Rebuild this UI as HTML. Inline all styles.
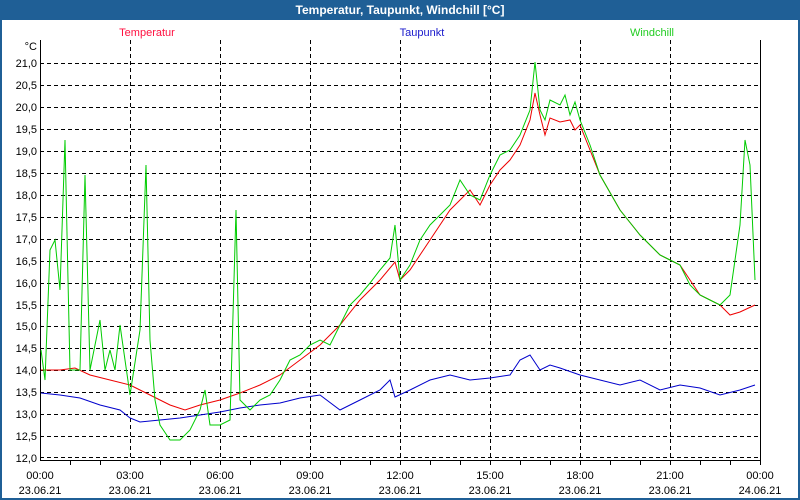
<!DOCTYPE html>
<html><head><meta charset="utf-8"><style>
html,body{margin:0;padding:0;width:800px;height:500px;overflow:hidden;background:#fff}
svg{display:block}
text{font-family:"Liberation Sans",sans-serif;font-size:11px}
</style></head><body>
<svg width="800" height="500" xmlns="http://www.w3.org/2000/svg" shape-rendering="crispEdges">
<rect x="0" y="0" width="800" height="500" fill="#1f5f96"/>
<rect x="2" y="20" width="796" height="478" fill="#fff"/>
<text x="400" y="14" text-anchor="middle" fill="#fff" font-weight="bold" style="font-size:12px">Temperatur, Taupunkt, Windchill [°C]</text>
<text x="147" y="36" text-anchor="middle" fill="#ff1040">Temperatur</text>
<text x="422" y="36" text-anchor="middle" fill="#1a1acc">Taupunkt</text>
<text x="652" y="36" text-anchor="middle" fill="#22cc22">Windchill</text>
<g stroke="#000" stroke-dasharray="4,3" stroke-width="1">
<line x1="40" x2="760" y1="63.5" y2="63.5"/><line x1="40" x2="760" y1="85.5" y2="85.5"/><line x1="40" x2="760" y1="107.5" y2="107.5"/><line x1="40" x2="760" y1="129.5" y2="129.5"/><line x1="40" x2="760" y1="151.5" y2="151.5"/><line x1="40" x2="760" y1="173.5" y2="173.5"/><line x1="40" x2="760" y1="195.5" y2="195.5"/><line x1="40" x2="760" y1="217.5" y2="217.5"/><line x1="40" x2="760" y1="239.5" y2="239.5"/><line x1="40" x2="760" y1="261.5" y2="261.5"/><line x1="40" x2="760" y1="283.5" y2="283.5"/><line x1="40" x2="760" y1="305.5" y2="305.5"/><line x1="40" x2="760" y1="326.5" y2="326.5"/><line x1="40" x2="760" y1="348.5" y2="348.5"/><line x1="40" x2="760" y1="370.5" y2="370.5"/><line x1="40" x2="760" y1="392.5" y2="392.5"/><line x1="40" x2="760" y1="414.5" y2="414.5"/><line x1="40" x2="760" y1="436.5" y2="436.5"/><line x1="40" x2="760" y1="457.5" y2="457.5"/>
<line x1="130.5" x2="130.5" y1="40" y2="460"/><line x1="220.5" x2="220.5" y1="40" y2="460"/><line x1="310.5" x2="310.5" y1="40" y2="460"/><line x1="400.5" x2="400.5" y1="40" y2="460"/><line x1="490.5" x2="490.5" y1="40" y2="460"/><line x1="580.5" x2="580.5" y1="40" y2="460"/><line x1="670.5" x2="670.5" y1="40" y2="460"/>
</g>
<path d="M40.5 40V460.5H760.5V40" fill="none" stroke="#000"/>
<g stroke="#000"><line x1="70.5" x2="70.5" y1="460" y2="465"/><line x1="100.5" x2="100.5" y1="460" y2="465"/><line x1="130.5" x2="130.5" y1="460" y2="465"/><line x1="160.5" x2="160.5" y1="460" y2="465"/><line x1="190.5" x2="190.5" y1="460" y2="465"/><line x1="220.5" x2="220.5" y1="460" y2="465"/><line x1="250.5" x2="250.5" y1="460" y2="465"/><line x1="280.5" x2="280.5" y1="460" y2="465"/><line x1="310.5" x2="310.5" y1="460" y2="465"/><line x1="340.5" x2="340.5" y1="460" y2="465"/><line x1="370.5" x2="370.5" y1="460" y2="465"/><line x1="400.5" x2="400.5" y1="460" y2="465"/><line x1="430.5" x2="430.5" y1="460" y2="465"/><line x1="460.5" x2="460.5" y1="460" y2="465"/><line x1="490.5" x2="490.5" y1="460" y2="465"/><line x1="520.5" x2="520.5" y1="460" y2="465"/><line x1="550.5" x2="550.5" y1="460" y2="465"/><line x1="580.5" x2="580.5" y1="460" y2="465"/><line x1="610.5" x2="610.5" y1="460" y2="465"/><line x1="640.5" x2="640.5" y1="460" y2="465"/><line x1="670.5" x2="670.5" y1="460" y2="465"/><line x1="700.5" x2="700.5" y1="460" y2="465"/><line x1="730.5" x2="730.5" y1="460" y2="465"/><line x1="760.5" x2="760.5" y1="460" y2="465"/></g>
<g fill="#000" text-anchor="end">
<text x="37" y="50">°C</text>
<text x="37" y="67">21,0</text><text x="37" y="89">20,5</text><text x="37" y="111">20,0</text><text x="37" y="133">19,5</text><text x="37" y="155">19,0</text><text x="37" y="177">18,5</text><text x="37" y="199">18,0</text><text x="37" y="221">17,5</text><text x="37" y="243">17,0</text><text x="37" y="265">16,5</text><text x="37" y="287">16,0</text><text x="37" y="309">15,5</text><text x="37" y="330">15,0</text><text x="37" y="352">14,5</text><text x="37" y="374">14,0</text><text x="37" y="396">13,5</text><text x="37" y="418">13,0</text><text x="37" y="440">12,5</text><text x="37" y="462">12,0</text>
</g>
<g fill="#000" text-anchor="middle">
<text x="40" y="479">00:00</text><text x="40" y="494">23.06.21</text>
<text x="130" y="479">03:00</text><text x="130" y="494">23.06.21</text>
<text x="220" y="479">06:00</text><text x="220" y="494">23.06.21</text>
<text x="310" y="479">09:00</text><text x="310" y="494">23.06.21</text>
<text x="400" y="479">12:00</text><text x="400" y="494">23.06.21</text>
<text x="490" y="479">15:00</text><text x="490" y="494">23.06.21</text>
<text x="580" y="479">18:00</text><text x="580" y="494">23.06.21</text>
<text x="670" y="479">21:00</text><text x="670" y="494">23.06.21</text>
<text x="760" y="479">00:00</text><text x="760" y="494">24.06.21</text>
</g>
<g fill="none" stroke-width="1" shape-rendering="auto">
<polyline stroke="#0000cc" points="41,393 60,395 80,398 100,405 120,410 130,418 140,422 160,420 180,418 200,415 220,412 240,408 260,405 280,403 300,398 320,395 340,410 360,400 380,390 390,380 395,397 410,390 430,380 450,375 470,380 490,378 510,375 520,360 530,355 540,370 550,365 560,368 580,375 600,380 620,385 640,380 660,390 680,385 700,388 720,395 740,390 755,385"/>
<polyline stroke="#ee0000" points="41,370 60,370 75,368 90,375 110,380 130,385 150,395 170,405 185,410 200,405 220,400 240,393 260,385 280,375 300,360 320,345 340,325 360,300 380,280 395,262 400,280 410,270 430,240 450,210 470,190 480,205 490,185 500,170 510,160 520,145 530,120 535,93 540,115 545,135 550,118 560,122 570,120 575,130 580,125 590,150 600,175 620,210 640,235 660,255 680,265 700,295 720,305 730,315 740,312 755,305"/>
<polyline stroke="#00cc00" points="41,350 45,380 50,250 55,240 60,290 65,140 68,280 70,370 80,370 85,175 90,370 100,320 105,370 110,350 115,370 120,325 125,360 130,395 140,330 146,165 150,340 155,400 160,425 170,440 180,440 190,430 200,410 205,390 210,425 220,425 230,420 236,210 240,400 250,410 260,400 270,395 280,380 290,360 300,355 310,345 320,340 330,345 340,325 350,305 360,295 370,283 380,270 390,258 395,225 400,280 410,265 420,240 430,225 440,215 450,205 460,180 470,195 480,200 490,175 500,155 510,150 520,135 530,110 535,62 540,110 545,120 550,100 560,105 565,95 570,115 575,102 580,120 590,145 600,175 620,210 640,235 660,255 670,260 680,265 690,285 700,295 710,300 720,305 730,295 740,225 745,140 750,165 755,280"/>
</g>
</svg>
</body></html>
